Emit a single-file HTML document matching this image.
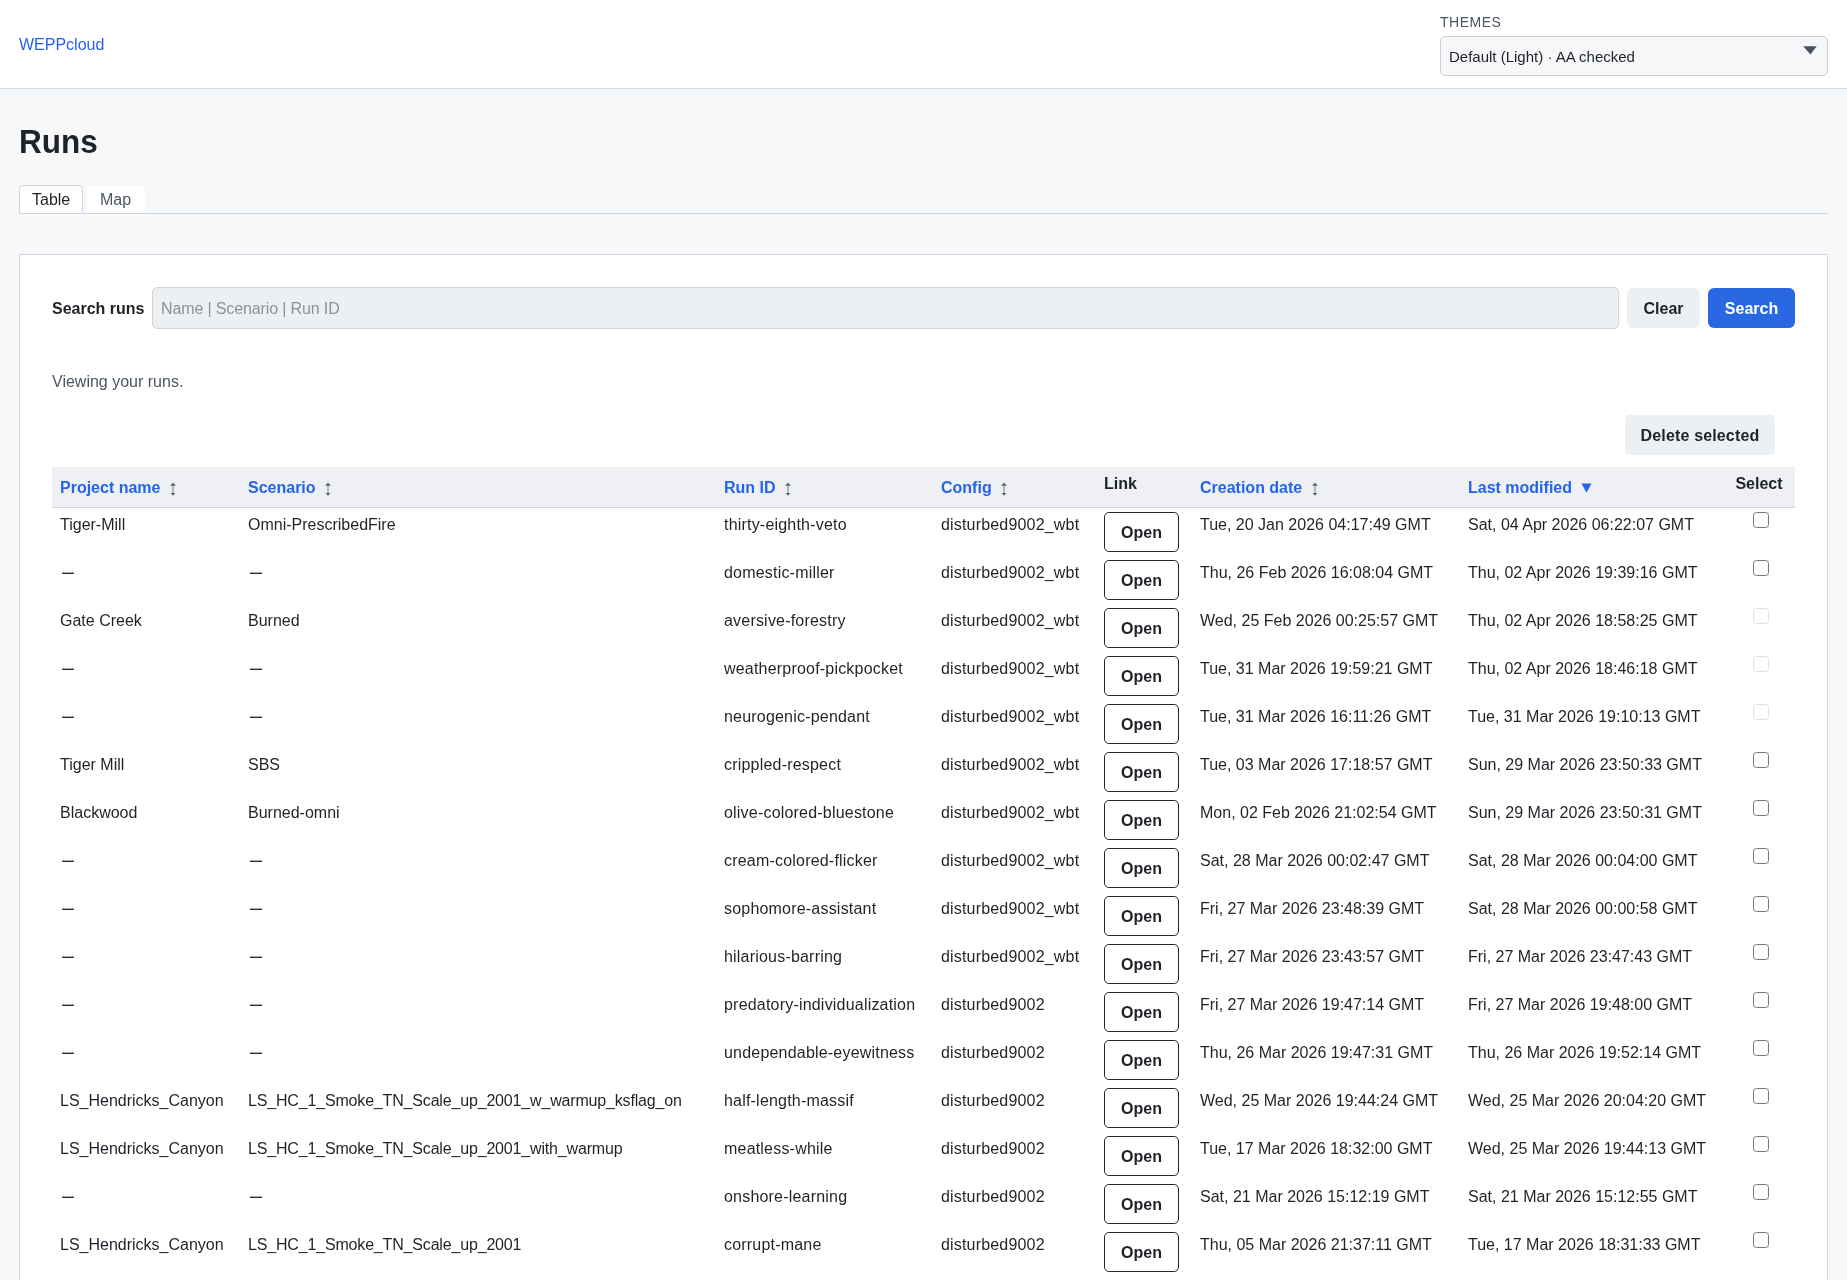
<!DOCTYPE html>
<html><head><meta charset="utf-8"><title>Runs</title>
<style>
*{box-sizing:border-box;margin:0;padding:0}
html,body{width:1847px;height:1280px;overflow:hidden}
#wrap{position:absolute;left:0;top:0;width:1847px;height:1280px;will-change:transform}
body{background:#f6f8fa;font-family:"Liberation Sans",sans-serif;color:#1f2328;position:relative;font-size:16px;line-height:24px}
.hdr{position:absolute;left:0;top:0;width:1847px;height:89px;background:#fff;border-bottom:1px solid #d3d9e1}
.brand{position:absolute;left:19px;top:33px;color:#2563eb;font-size:16px;line-height:24px;text-decoration:none}
.themes{position:absolute;left:1440px;top:12px;font-size:14px;line-height:20px;letter-spacing:0.5px;color:#4b5563}
.tsel{position:absolute;left:1440px;top:36px;width:388px;height:40px;background:#f6f7f9;border:1px solid #cdd3db;border-radius:5px}
.tsel span{position:absolute;left:8px;top:10px;font-size:15px;line-height:20px;color:#1f2328}
.tsel svg{position:absolute;left:362px;top:9px}
h1{position:absolute;left:19px;top:122px;font-size:33px;line-height:40px;font-weight:700;color:#1f2328;transform:scaleX(0.955);transform-origin:0 0}
.tabline{position:absolute;left:19px;top:213px;width:1809px;height:1px;background:#cfd6df}
.tab{position:absolute;top:185px;height:28px;border-radius:5px 5px 0 0;background:#fff}
.tab span{position:absolute;top:2px;font-size:16px;line-height:24px}
.tab1{left:19px;width:64px;border:1px solid #cfd6df;border-bottom:none}
.tab1 span{left:12px;color:#1f2328}
.tab2{left:87px;width:58px}
.tab2 span{left:13px;top:3px;color:#4b5563}
.panel{position:absolute;left:19px;top:254px;width:1809px;height:1100px;background:#fff;border:1px solid #d3d9e1}
.lbl{position:absolute;left:52px;top:297px;font-weight:700}
.inp{position:absolute;left:152px;top:287px;width:1467px;height:42px;background:#edf0f3;border:1px solid #cfd5dc;border-radius:5px}
.inp span{position:absolute;left:8px;top:9px;color:#8d9298;letter-spacing:-.13px}
.btn{position:absolute;height:40px;border-radius:6px;background:#edf0f3;font-weight:700;color:#1f2328;text-align:center;line-height:24px;padding-top:8px}
.clear{left:1627px;top:288px;width:73px;padding-top:9px}
.search{left:1708px;top:288px;width:87px;padding-top:9px;background:#2a67e3;color:#fff}
.view{position:absolute;left:52px;top:370px;color:#4b5563}
.del{left:1625px;top:415px;width:150px;padding-top:9px;letter-spacing:.15px;border-radius:5px}
table{position:absolute;left:52px;top:467px;width:1743px;border-collapse:separate;border-spacing:0;table-layout:fixed}
thead th{background:#eef0f3;height:41px;border-bottom:1px solid #cfd6df;text-align:left;font-weight:700;padding:0 8px;vertical-align:top}
th .s{display:inline-block;color:#2563eb;margin-top:9px}
th .p{display:inline-block;color:#1f2328;margin-top:5px}
th svg{vertical-align:top;position:relative;top:6px;margin-left:4px}
th svg.dn{top:7px}
td{height:48px;padding:5px 8px 3px;vertical-align:top;white-space:nowrap;color:#1f2328}
.sel{text-align:center}
td:nth-child(3){letter-spacing:.2px}
td:nth-child(4){letter-spacing:.18px}
td.us{letter-spacing:-.17px}
.dash{display:inline-block;width:12px;height:2px;background:linear-gradient(#a9acb1 0 50%,#2a2e34 50% 100%);margin-left:2px;vertical-align:top;margin-top:11px}
.open{display:inline-block;width:75px;height:40px;border:1.3px solid #22262b;border-radius:5px;font-weight:700;text-align:center;line-height:24px;padding-top:8px;margin-top:-1px}
.cb{display:inline-block;width:16px;height:16px;border:1.25px solid #777;border-radius:3.5px;vertical-align:top;margin-left:2px;margin-top:-1px}
.cb.dis{border-color:#e0e0e0}
</style></head><body><div id="wrap">
<div class="hdr">
<a class="brand" href="#">WEPPcloud</a>
<div class="themes">THEMES</div>
<div class="tsel"><span>Default (Light) · AA checked</span><svg width="14" height="9" viewBox="0 0 14 9"><path d="M0.3 0.3 H13.7 L7.4 8.6 Z" fill="#4a5260"/></svg></div>
</div>
<h1>Runs</h1>
<div class="tabline"></div>
<div class="tab tab1"><span>Table</span></div>
<div class="tab tab2"><span>Map</span></div>
<div class="panel"></div>
<div class="lbl">Search runs</div>
<div class="inp"><span>Name | Scenario | Run ID</span></div>
<div class="btn clear">Clear</div>
<div class="btn search">Search</div>
<div class="view">Viewing your runs.</div>
<div class="btn del">Delete selected</div>
<table>
<colgroup><col style="width:188px"><col style="width:476px"><col style="width:217px"><col style="width:163px"><col style="width:96px"><col style="width:268px"><col style="width:265px"><col style="width:70px"></colgroup>
<thead><tr>
<th><span class="s">Project name <svg width="8" height="14" viewBox="0 0 8 14"><path d="M4 3.4 V11.3" stroke="#b3b9c2" stroke-width="2"/><path d="M1 3.8 L4 0.8 L7 3.8 Z M1.6 11 L4 13.8 L6.4 11 Z" fill="#5b6270"/></svg></span></th>
<th><span class="s">Scenario <svg width="8" height="14" viewBox="0 0 8 14"><path d="M4 3.4 V11.3" stroke="#b3b9c2" stroke-width="2"/><path d="M1 3.8 L4 0.8 L7 3.8 Z M1.6 11 L4 13.8 L6.4 11 Z" fill="#5b6270"/></svg></span></th>
<th><span class="s">Run ID <svg width="8" height="14" viewBox="0 0 8 14"><path d="M4 3.4 V11.3" stroke="#b3b9c2" stroke-width="2"/><path d="M1 3.8 L4 0.8 L7 3.8 Z M1.6 11 L4 13.8 L6.4 11 Z" fill="#5b6270"/></svg></span></th>
<th><span class="s">Config <svg width="8" height="14" viewBox="0 0 8 14"><path d="M4 3.4 V11.3" stroke="#b3b9c2" stroke-width="2"/><path d="M1 3.8 L4 0.8 L7 3.8 Z M1.6 11 L4 13.8 L6.4 11 Z" fill="#5b6270"/></svg></span></th>
<th><span class="p">Link</span></th>
<th><span class="s">Creation date <svg width="8" height="14" viewBox="0 0 8 14"><path d="M4 3.4 V11.3" stroke="#b3b9c2" stroke-width="2"/><path d="M1 3.8 L4 0.8 L7 3.8 Z M1.6 11 L4 13.8 L6.4 11 Z" fill="#5b6270"/></svg></span></th>
<th><span class="s">Last modified <svg class="dn" width="11" height="10" viewBox="0 0 11 10" style="margin-left:5px"><path d="M0.5 0.5 H10.5 L5.5 9.8 Z" fill="#2563eb"/></svg></span></th>
<th style="text-align:center"><span class="p" style="position:relative;left:-1px">Select</span></th>
</tr></thead>
<tbody>
<tr><td>Tiger-Mill</td><td>Omni-PrescribedFire</td><td>thirty-eighth-veto</td><td>disturbed9002_wbt</td><td><span class="open">Open</span></td><td>Tue, 20 Jan 2026 04:17:49 GMT</td><td>Sat, 04 Apr 2026 06:22:07 GMT</td><td class="sel"><span class="cb"></span></td></tr>
<tr><td><span class="dash"></span></td><td><span class="dash"></span></td><td>domestic-miller</td><td>disturbed9002_wbt</td><td><span class="open">Open</span></td><td>Thu, 26 Feb 2026 16:08:04 GMT</td><td>Thu, 02 Apr 2026 19:39:16 GMT</td><td class="sel"><span class="cb"></span></td></tr>
<tr><td>Gate Creek</td><td>Burned</td><td>aversive-forestry</td><td>disturbed9002_wbt</td><td><span class="open">Open</span></td><td>Wed, 25 Feb 2026 00:25:57 GMT</td><td>Thu, 02 Apr 2026 18:58:25 GMT</td><td class="sel"><span class="cb dis"></span></td></tr>
<tr><td><span class="dash"></span></td><td><span class="dash"></span></td><td>weatherproof-pickpocket</td><td>disturbed9002_wbt</td><td><span class="open">Open</span></td><td>Tue, 31 Mar 2026 19:59:21 GMT</td><td>Thu, 02 Apr 2026 18:46:18 GMT</td><td class="sel"><span class="cb dis"></span></td></tr>
<tr><td><span class="dash"></span></td><td><span class="dash"></span></td><td>neurogenic-pendant</td><td>disturbed9002_wbt</td><td><span class="open">Open</span></td><td>Tue, 31 Mar 2026 16:11:26 GMT</td><td>Tue, 31 Mar 2026 19:10:13 GMT</td><td class="sel"><span class="cb dis"></span></td></tr>
<tr><td>Tiger Mill</td><td>SBS</td><td>crippled-respect</td><td>disturbed9002_wbt</td><td><span class="open">Open</span></td><td>Tue, 03 Mar 2026 17:18:57 GMT</td><td>Sun, 29 Mar 2026 23:50:33 GMT</td><td class="sel"><span class="cb"></span></td></tr>
<tr><td>Blackwood</td><td>Burned-omni</td><td>olive-colored-bluestone</td><td>disturbed9002_wbt</td><td><span class="open">Open</span></td><td>Mon, 02 Feb 2026 21:02:54 GMT</td><td>Sun, 29 Mar 2026 23:50:31 GMT</td><td class="sel"><span class="cb"></span></td></tr>
<tr><td><span class="dash"></span></td><td><span class="dash"></span></td><td>cream-colored-flicker</td><td>disturbed9002_wbt</td><td><span class="open">Open</span></td><td>Sat, 28 Mar 2026 00:02:47 GMT</td><td>Sat, 28 Mar 2026 00:04:00 GMT</td><td class="sel"><span class="cb"></span></td></tr>
<tr><td><span class="dash"></span></td><td><span class="dash"></span></td><td>sophomore-assistant</td><td>disturbed9002_wbt</td><td><span class="open">Open</span></td><td>Fri, 27 Mar 2026 23:48:39 GMT</td><td>Sat, 28 Mar 2026 00:00:58 GMT</td><td class="sel"><span class="cb"></span></td></tr>
<tr><td><span class="dash"></span></td><td><span class="dash"></span></td><td>hilarious-barring</td><td>disturbed9002_wbt</td><td><span class="open">Open</span></td><td>Fri, 27 Mar 2026 23:43:57 GMT</td><td>Fri, 27 Mar 2026 23:47:43 GMT</td><td class="sel"><span class="cb"></span></td></tr>
<tr><td><span class="dash"></span></td><td><span class="dash"></span></td><td>predatory-individualization</td><td>disturbed9002</td><td><span class="open">Open</span></td><td>Fri, 27 Mar 2026 19:47:14 GMT</td><td>Fri, 27 Mar 2026 19:48:00 GMT</td><td class="sel"><span class="cb"></span></td></tr>
<tr><td><span class="dash"></span></td><td><span class="dash"></span></td><td>undependable-eyewitness</td><td>disturbed9002</td><td><span class="open">Open</span></td><td>Thu, 26 Mar 2026 19:47:31 GMT</td><td>Thu, 26 Mar 2026 19:52:14 GMT</td><td class="sel"><span class="cb"></span></td></tr>
<tr><td>LS_Hendricks_Canyon</td><td class="us">LS_HC_1_Smoke_TN_Scale_up_2001_w_warmup_ksflag_on</td><td>half-length-massif</td><td>disturbed9002</td><td><span class="open">Open</span></td><td>Wed, 25 Mar 2026 19:44:24 GMT</td><td>Wed, 25 Mar 2026 20:04:20 GMT</td><td class="sel"><span class="cb"></span></td></tr>
<tr><td>LS_Hendricks_Canyon</td><td class="us">LS_HC_1_Smoke_TN_Scale_up_2001_with_warmup</td><td>meatless-while</td><td>disturbed9002</td><td><span class="open">Open</span></td><td>Tue, 17 Mar 2026 18:32:00 GMT</td><td>Wed, 25 Mar 2026 19:44:13 GMT</td><td class="sel"><span class="cb"></span></td></tr>
<tr><td><span class="dash"></span></td><td><span class="dash"></span></td><td>onshore-learning</td><td>disturbed9002</td><td><span class="open">Open</span></td><td>Sat, 21 Mar 2026 15:12:19 GMT</td><td>Sat, 21 Mar 2026 15:12:55 GMT</td><td class="sel"><span class="cb"></span></td></tr>
<tr><td>LS_Hendricks_Canyon</td><td class="us">LS_HC_1_Smoke_TN_Scale_up_2001</td><td>corrupt-mane</td><td>disturbed9002</td><td><span class="open">Open</span></td><td>Thu, 05 Mar 2026 21:37:11 GMT</td><td>Tue, 17 Mar 2026 18:31:33 GMT</td><td class="sel"><span class="cb"></span></td></tr>
</tbody></table>
</div></body></html>
